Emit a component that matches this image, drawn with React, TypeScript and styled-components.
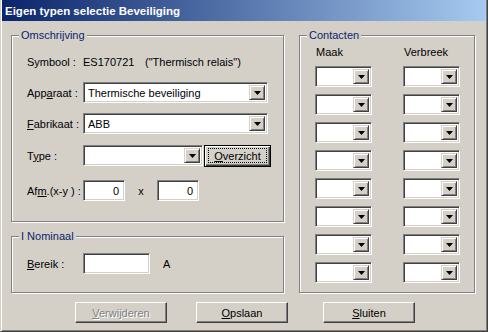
import React from 'react';
import styled, { createGlobalStyle } from 'styled-components';

const GlobalStyle = createGlobalStyle`
  html, body {
    margin: 0;
    padding: 0;
    background: #d4d0c8;
  }
  body {
    font-family: 'Liberation Sans', Arial, sans-serif;
    font-size: 11px;
    color: #000;
  }
  u {
    text-underline-offset: 1px;
  }
`;

const Window = styled.div`
  width: 488px;
  height: 332px;
  box-sizing: border-box;
  background: #d4d0c8;
  border-left: 1px solid #d4d0c8;
  border-right: 1px solid #404040;
  border-bottom: 1px solid #404040;
  box-shadow: inset 1px 0 #fff, inset -1px -1px #808080;
  display: flex;
  flex-direction: column;
`;

const TitleBar = styled.div`
  height: 21px;
  margin: 0 1px;
  padding-left: 3px;
  display: flex;
  align-items: center;
  background: linear-gradient(to right, #0a246a, #a6caf0);
  color: #fff;
  font-weight: bold;
  font-size: 11.5px;
`;

const Body = styled.div`
  display: grid;
  grid-template-columns: 273px 176px;
  column-gap: 15px;
  padding: 14px 0 0 10px;
`;

const LeftColumn = styled.div`
  display: flex;
  flex-direction: column;
  gap: 14px;
`;

const Group = styled.div<{ $h: number }>`
  position: relative;
  box-sizing: border-box;
  height: ${(p) => p.$h}px;
  border: 1px solid #808080;
  box-shadow: inset 1px 1px #fff, 1px 1px #fff;
`;

const Legend = styled.span`
  position: absolute;
  top: -8px;
  left: 7px;
  padding: 0 2px;
  line-height: 14px;
  background: #d4d0c8;
  color: #0a246a;
`;

const FieldGrid = styled.div`
  display: grid;
  grid-template-columns: 56px auto;
  grid-template-rows: 31px 31px 32px 35px 21px;
  align-items: start;
  padding: 15px 0 0 15px;
`;

const NominalGrid = styled.div`
  display: grid;
  grid-template-columns: 56px auto;
  padding: 16px 0 0 15px;
`;

const Label = styled.div`
  height: 21px;
  display: flex;
  align-items: center;
  white-space: nowrap;
`;

const Controls = styled.div`
  height: 21px;
  display: flex;
  align-items: center;
  white-space: nowrap;
`;

const Code = styled.span`
  display: inline-block;
  width: 62px;
`;

const Sunken = styled.div<{ $w: number }>`
  box-sizing: border-box;
  width: ${(p) => p.$w}px;
  height: 21px;
  background: #fff;
  border: 1px solid;
  border-color: #808080 #fff #fff #808080;
  box-shadow: inset 1px 1px #404040, inset -1px -1px #d4d0c8;
  padding: 2px;
  display: flex;
  align-items: stretch;
`;

const ComboText = styled.div`
  flex: 1;
  display: flex;
  align-items: center;
  padding-left: 2px;
  overflow: hidden;
  white-space: nowrap;
`;

const EditText = styled.div`
  flex: 1;
  display: flex;
  align-items: center;
  justify-content: flex-end;
  padding-right: 3px;
`;

const DropButton = styled.div`
  box-sizing: border-box;
  width: 16px;
  background: #d4d0c8;
  border: 1px solid;
  border-color: #d4d0c8 #404040 #404040 #d4d0c8;
  box-shadow: inset 1px 1px #fff, inset -1px -1px #808080;
  display: flex;
  align-items: center;
  justify-content: center;
`;

const Sep = styled.span`
  width: 32px;
  text-align: center;
`;

const Unit = styled.span`
  margin-left: 13px;
`;

const Button = styled.div<{ $gap?: number; $disabled?: boolean }>`
  box-sizing: border-box;
  width: 92px;
  height: 21px;
  margin-left: ${(p) => p.$gap ?? 0}px;
  background: #d4d0c8;
  border: 1px solid;
  border-color: #fff #404040 #404040 #fff;
  box-shadow: inset -1px -1px #808080;
  display: flex;
  align-items: center;
  justify-content: center;
  color: ${(p) => (p.$disabled ? '#808080' : '#000')};
  text-shadow: ${(p) => (p.$disabled ? '1px 1px 0 #fff' : 'none')};
`;

const FocusButton = styled.div`
  box-sizing: border-box;
  width: 67px;
  height: 22px;
  margin-left: 1px;
  border: 1px solid #000;
  background: #d4d0c8;
  box-shadow: inset 1px 1px #fff, inset -1px -1px #404040, inset -2px -2px #808080;
  display: flex;
  align-items: center;
  justify-content: center;
`;

const FocusRing = styled.span`
  box-sizing: border-box;
  width: 59px;
  height: 15px;
  border: 1px dotted #000;
  display: flex;
  align-items: center;
  justify-content: center;
`;

const ContactGrid = styled.div`
  display: grid;
  grid-template-columns: 57px 57px;
  grid-template-rows: 13px;
  grid-auto-rows: 21px;
  column-gap: 31px;
  row-gap: 7px;
  padding: 10px 0 0 15px;
`;

const ColumnHead = styled.div`
  line-height: 13px;
  padding-left: 1px;
`;

const ButtonRow = styled.div`
  display: flex;
  padding-left: 74px;
  margin-top: 9px;
`;

const Arrow = () => (
  <svg width="7" height="4" viewBox="0 0 7 4">
    <polygon points="0,0 7,0 3.5,4" fill="#000" />
  </svg>
);

const Combo = ({ w, value }: { w: number; value?: string }) => (
  <Sunken $w={w}>
    <ComboText>{value}</ComboText>
    <DropButton>
      <Arrow />
    </DropButton>
  </Sunken>
);

const Edit = ({ w, value }: { w: number; value?: string }) => (
  <Sunken $w={w}>
    <EditText>{value}</EditText>
  </Sunken>
);

export default function App() {
  const rows = Array.from({ length: 8 }, (_, i) => i);

  return (
    <Window>
      <GlobalStyle />
      <TitleBar>Eigen typen selectie Beveiliging</TitleBar>

      <Body>
        <LeftColumn>
          <Group $h={187}>
            <Legend>Omschrijving</Legend>
            <FieldGrid>
              <Label>Symbool :</Label>
              <Controls>
                <Code>ES170721</Code>
                <span>("Thermisch relais")</span>
              </Controls>

              <Label>
                <span>
                  App<u>a</u>raat :
                </span>
              </Label>
              <Controls>
                <Combo w={185} value="Thermische beveiliging" />
              </Controls>

              <Label>
                <span>
                  <u>F</u>abrikaat :
                </span>
              </Label>
              <Controls>
                <Combo w={185} value="ABB" />
              </Controls>

              <Label>
                <span>
                  T<u>y</u>pe :
                </span>
              </Label>
              <Controls>
                <Combo w={120} />
                <FocusButton>
                  <FocusRing>
                    <u>O</u>verzicht
                  </FocusRing>
                </FocusButton>
              </Controls>

              <Label>
                <span>
                  Af<u>m</u>.(x-y ) :
                </span>
              </Label>
              <Controls>
                <Edit w={42} value="0" />
                <Sep>x</Sep>
                <Edit w={42} value="0" />
              </Controls>
            </FieldGrid>
          </Group>

          <Group $h={57}>
            <Legend>I Nominaal</Legend>
            <NominalGrid>
              <Label>
                <span>
                  <u>B</u>ereik :
                </span>
              </Label>
              <Controls>
                <Edit w={67} />
                <Unit>A</Unit>
              </Controls>
            </NominalGrid>
          </Group>
        </LeftColumn>

        <Group $h={258}>
          <Legend>Contacten</Legend>
          <ContactGrid>
            <ColumnHead>Maak</ColumnHead>
            <ColumnHead>Verbreek</ColumnHead>
            {rows.map((i) => (
              <React.Fragment key={i}>
                <Combo w={57} />
                <Combo w={57} />
              </React.Fragment>
            ))}
          </ContactGrid>
        </Group>
      </Body>

      <ButtonRow>
        <Button $disabled>
          <span>
            <u>V</u>erwijderen
          </span>
        </Button>
        <Button $gap={29}>
          <span>
            <u>O</u>pslaan
          </span>
        </Button>
        <Button $gap={35}>
          <span>
            <u>S</u>luiten
          </span>
        </Button>
      </ButtonRow>
    </Window>
  );
}
